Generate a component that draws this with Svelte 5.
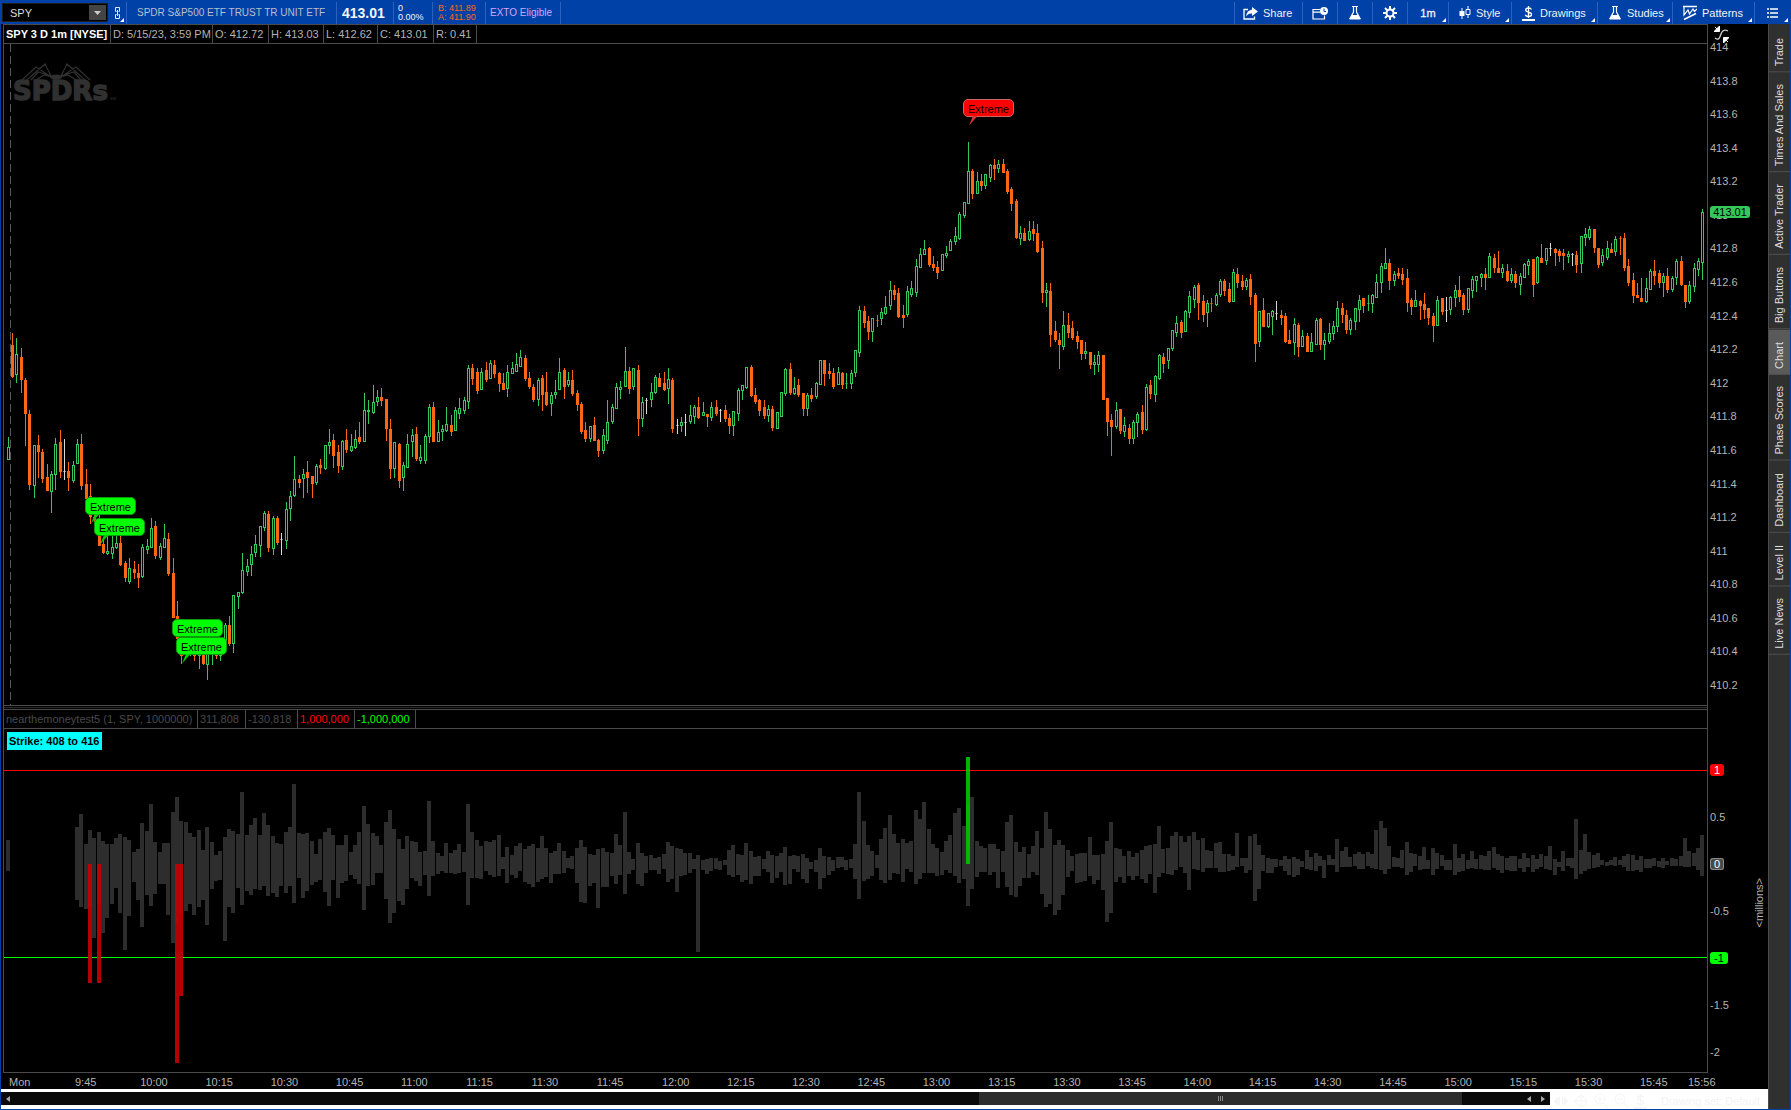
<script lang="ts">
	type Candle = { kind: string; high: number; top: number; bottom: number; low: number };
	type Callout = { x: number; y: number; tone: 'up' | 'down'; tail: boolean };

	// One bar per minute, both panels share the same x scale
	const STEP = 4.3455;
	const FIRST = 8.01;
	const LEFT = 4;
	const WIDTH = 1703;
	const PRICE_TOP = 44;
	const PRICE_HEIGHT = 661;
	const STUDY_HEIGHT = 343;
	const ZERO = 135;

	const barX = (i: number) => Math.floor(FIRST + i * STEP) - LEFT;

	// kind, high, body top, body bottom, low
	const candleData = `
		g437,447,459,459 o333,345,376,377 g338,354,374,382 o348,357,379,392 o378,380,413,445 o410,414,484,489 g445,445,485,497 o435,445,451,477
		o449,452,478,482 o464,477,490,490 g471,474,491,512 g438,444,474,489 o430,442,471,477 w439,471,471,479 o462,471,477,490 g461,465,480,482
		g439,444,463,463 o434,444,485,489 o469,484,498,498 o484,496,516,523 o515,517,519,522 o515,533,545,545 o539,544,552,553 g535,551,553,554
		g535,547,553,558 g535,543,547,548 o535,543,564,565 o561,563,577,581 g558,568,581,583 o561,569,572,578 o564,573,577,587 g544,547,576,577
		g539,546,549,553 g518,528,547,547 o521,526,555,558 g543,546,557,559 g524,538,547,547 o533,539,573,575 o558,573,617,617 o601,616,638,639
		o640,645,655,663 g642,646,652,655 g642,646,652,655 o645,650,655,660 g640,645,655,668 o650,652,663,664 g645,650,664,679 g640,645,654,664
		o640,645,655,658 g640,645,655,660 g623,625,641,645 o616,625,643,645 g595,595,643,652 g592,592,596,608 g553,570,592,593 g559,566,571,575
		g546,554,564,575 g535,544,552,556 g526,526,545,556 g511,513,527,530 o511,514,547,551 g516,518,548,554 o516,518,542,544 w533,539,539,554
		g502,509,540,548 g491,496,508,520 g456,479,495,496 o475,479,482,487 g469,474,478,497 o461,472,477,492 o476,476,483,497 g464,466,482,484
		o459,465,467,473 g445,445,468,469 g429,442,445,453 o434,440,455,467 o445,452,465,472 g440,441,466,469 o429,440,449,452 g434,446,450,451
		g430,439,447,448 o422,437,441,443 g393,410,441,441 g400,410,411,423 g385,402,412,413 g390,397,401,405 o388,397,400,405 o399,399,428,440
		o419,429,468,478 g442,442,468,477 o443,444,480,487 g462,465,477,490 g434,444,467,467 g429,435,441,456 o427,434,458,460 g445,457,460,463
		g434,436,460,463 g404,407,436,442 o402,407,441,441 g420,432,441,441 g425,429,431,440 g407,424,430,431 o415,425,431,435 g407,410,430,430
		g398,408,413,418 g397,400,410,413 g365,368,401,408 o364,368,378,384 o368,372,390,393 g368,372,389,389 o362,370,379,381 g360,363,378,378
		o360,365,373,377 o372,373,383,391 o373,383,389,389 g365,372,388,396 g362,368,373,373 g353,364,371,371 g350,357,366,366 o355,358,378,380
		o372,378,386,388 o384,387,399,401 g378,380,399,405 o375,378,394,410 o372,392,404,405 g392,395,403,415 g380,392,394,398 g358,372,389,389
		o368,370,386,398 g372,380,384,386 o370,380,393,395 o390,393,404,410 o402,404,431,433 o422,430,438,441 g426,426,438,441 o417,425,440,440
		o439,440,450,456 g429,435,450,453 g400,422,440,443 g404,407,421,423 g383,387,408,408 g381,387,389,398 g347,371,386,386 o367,371,388,393
		g368,368,386,389 o365,370,418,435 g397,402,418,426 w398,400,400,413 g383,392,399,406 g375,377,392,393 o373,378,386,386 o372,383,389,390
		g368,379,388,403 o378,380,428,432 w419,425,425,433 g417,422,425,431 w414,422,422,435 g405,415,421,423 g405,407,416,423 o397,407,417,418
		g402,412,415,415 o414,414,416,426 g402,407,417,420 o400,407,413,415 w409,410,410,421 o405,410,418,421 o414,418,425,433 g411,411,425,435
		g388,390,413,420 g385,385,390,399 g367,367,387,388 o365,367,395,396 o388,395,401,403 o399,400,410,415 o400,407,415,418 g405,409,415,421
		o406,409,427,430 g412,412,428,428 g392,392,416,416 g368,369,393,395 o363,369,392,394 g377,388,393,394 o379,385,394,396 o393,393,408,415
		g393,395,408,415 o388,395,398,401 g382,383,396,398 g360,360,384,384 o360,360,373,385 o363,371,373,378 o368,373,386,388 g367,372,384,384
		o372,373,384,388 g373,383,383,388 g370,373,383,388 g350,350,372,376 g306,310,352,356 o306,311,322,327 o316,321,331,339 g318,318,331,341
		o315,320,320,326 g308,312,318,324 g296,307,313,314 g281,290,305,309 o285,290,294,299 o288,293,316,317 o305,315,317,327 g286,291,314,316
		g281,288,294,296 g259,266,292,296 g248,254,267,267 g240,249,254,254 o247,248,264,266 o256,264,267,270 o261,267,272,278 g254,254,270,270
		g246,253,255,257 g239,241,250,250 g227,236,241,244 g212,214,238,239 g202,202,215,217 g142,171,203,203 o169,171,193,198 g172,181,193,193
		o174,181,185,190 g174,174,185,188 g164,165,177,181 o159,165,168,179 g160,164,168,172 o159,164,172,172 o169,171,191,193 o187,189,203,210
		o199,201,237,238 g226,233,238,244 o228,233,240,240 g221,231,239,240 o221,229,233,240 o224,233,251,252 o241,248,292,302 g283,290,292,306
		o283,291,334,346 o321,331,339,341 o333,340,344,368 g311,325,346,349 o313,325,332,337 o321,328,337,339 o331,336,341,348 o340,340,353,359
		g342,351,353,358 o352,352,364,368 g355,362,364,374 g351,355,364,371 o355,355,399,399 o398,398,421,435 o414,420,426,455 g402,410,426,428
		o409,409,430,433 g417,425,431,436 o424,428,438,443 g420,422,438,443 g412,414,422,436 o405,412,429,433 g384,387,429,430 o380,385,393,398
		g375,376,394,401 g354,355,378,379 o353,357,363,372 g348,348,360,368 g330,330,348,350 g316,323,332,336 o320,322,332,337 g310,311,331,331
		g291,296,312,317 g285,287,299,307 o283,285,302,319 o295,301,314,321 g300,303,312,326 o298,303,303,311 g293,295,304,305 g279,281,294,296
		o279,281,290,295 o283,289,301,302 g269,272,301,301 o268,274,282,287 o275,281,286,289 g278,280,286,289 o274,279,296,304 o293,295,343,361
		g311,311,341,346 o298,310,326,326 g313,313,326,327 g310,311,316,334 w301,313,313,319 o310,315,317,324 o313,316,341,342 o330,340,343,343
		g318,324,342,354 o323,325,346,356 g330,336,346,346 o333,336,351,351 g333,342,351,351 g318,320,344,344 o318,319,344,349 g333,340,344,359
		g323,333,341,343 g321,326,333,339 g301,308,326,331 o303,308,314,322 o310,315,329,333 g318,320,329,334 g308,308,321,329 g295,300,309,321
		o298,298,305,312 g295,303,303,310 g294,295,303,312 g274,282,297,297 g263,266,282,292 g248,263,268,268 o259,263,280,289 g271,274,280,285
		o268,273,275,278 o268,274,279,284 o269,278,302,311 o298,300,306,314 g290,300,306,306 o300,301,305,319 o293,304,309,318 o308,308,317,324
		o313,316,325,341 g296,300,325,325 o298,298,311,314 w297,310,310,321 g296,297,309,314 g285,290,297,306 o276,290,296,301 o293,295,309,314
		g288,288,309,312 g276,279,290,297 g276,276,280,291 g273,274,277,286 o268,274,277,289 g253,256,277,277 o254,258,267,272 o251,268,272,272
		g264,268,272,277 o264,271,280,281 g268,274,280,282 o271,274,282,287 g273,276,284,294 g263,264,277,277 g259,261,265,274 o259,259,284,296
		g256,257,282,283 o244,258,262,262 g248,248,260,264 w243,248,248,255 o248,249,252,265 o249,251,255,261 o249,253,255,269 g251,254,256,262
		w253,254,254,265 o251,255,264,272 g236,236,263,272 g228,234,237,245 g226,229,237,239 o229,229,247,252 o248,248,264,267 g249,255,262,265
		g241,248,257,259 o243,249,252,252 g236,239,251,255 o236,238,238,254 o233,238,267,270 o259,266,282,285 o273,280,295,302 o283,295,297,297
		o278,298,301,301 g278,288,301,302 g269,271,289,289 o260,271,275,284 o270,273,282,287 g273,276,282,296 o268,276,289,292 g276,278,289,291
		g259,261,277,284 o256,261,284,285 o285,285,301,307 g281,285,301,303 g263,268,286,291 g258,261,269,275 g209,212,262,279`;

	const candles: Candle[] = candleData
		.trim()
		.split(/\s+/)
		.map((row) => {
			const [high, top, bottom, low] = row
				.slice(1)
				.split(',')
				.map((v) => Number(v) - PRICE_TOP);
			return { kind: row[0], high, top, bottom, low };
		});

	// height above zero / depth below zero, starting at 9:45
	const studyData = `
		37,36 50,43 20,45 34,43 26,74 32,40 23,69 20,54 20,40 26,24 30,49 27,86 24,52 12,18 15,36 41,63 33,31 60,42 22,30 12,20
		21,20 21,51 52,79 67,60 43,50 42,47 31,40 27,51 34,43 14,36 37,61 22,25 9,17 13,16 27,77 35,43 33,49 30,24 72,41 29,27
		39,31 46,25 29,26 51,22 39,32 28,29 21,33 20,22 32,29 37,22 80,39 31,14 30,34 31,27 23,21 10,18 25,16 32,28 36,42 29,16
		19,34 19,19 29,17 12,11 19,15 32,20 58,46 40,22 31,21 28,9 19,9 42,35 54,59 35,49 25,37 15,41 28,25 23,14 22,17 12,22
		13,11 63,32 23,12 11,10 8,7 21,9 11,9 14,10 20,9 12,8 60,41 32,14 24,14 18,15 23,7 22,11 24,13 29,12 7,5 17,19
		9,11 18,14 21,7 15,18 18,20 20,23 16,18 28,15 16,13 11,19 13,10 21,10 13,9 6,4 8,5 16,19 24,38 17,39 10,22 9,19
		15,44 16,23 12,23 11,12 30,20 19,11 52,30 12,10 5,6 21,20 11,22 8,9 9,6 6,6 7,10 10,5 22,18 18,15 16,28 15,12
		11,11 11,9 5,5 9,88 4,6 5,10 6,7 6,5 3,6 4,1 14,11 19,13 10,11 9,18 21,16 13,20 7,12 8,12 5,5 13,8
		9,19 8,14 11,8 17,21 8,20 9,5 8,8 10,15 6,19 2,5 4,8 16,25 8,14 7,11 4,7 7,4 7,3 4,6 5,4 20,15
		72,35 43,17 19,15 13,12 9,4 25,16 36,19 49,16 30,9 21,10 25,18 21,5 23,8 54,20 45,15 62,9 35,9 20,9 16,12 12,11
		23,6 29,9 51,12 56,19 38,15 60,42 67,25 23,13 18,8 16,8 20,11 20,8 15,24 13,8 42,23 49,31 22,33 12,22 17,14 10,14
		18,8 33,11 16,30 52,43 35,40 19,51 24,46 19,31 14,13 8,7 10,19 11,18 11,17 27,12 9,20 9,16 10,26 23,58 42,49 16,18
		15,13 8,19 13,12 7,16 11,12 14,15 18,19 19,10 20,29 38,13 15,9 16,10 28,11 32,6 28,3 22,9 28,26 32,5 24,6 26,8
		14,4 13,4 21,4 22,8 10,8 10,7 8,6 31,3 6,2 6,9 28,6 30,37 19,25 9,7 6,9 5,9 5,3 4,2 8,7 5,11
		7,13 5,11 3,3 14,5 7,6 11,7 8,2 4,14 9,1 5,1 25,8 13,3 17,3 7,3 10,2 12,5 10,5 12,2 10,4 34,5
		43,6 36,10 18,5 7,3 6,3 14,4 22,11 11,8 10,2 8,6 17,5 4,5 16,11 11,5 9,2 4,6 4,6 20,11 6,8 10,7
		4,5 13,4 5,5 9,5 8,6 13,6 17,4 10,6 8,9 6,6 8,7 8,7 5,4 11,8 6,3 9,8 5,5 10,3 8,5 18,6
		5,11 2,3 13,7 6,2 6,4 45,15 14,10 30,7 12,5 9,4 11,3 4,1 2,2 4,1 7,2 4,1 8,3 10,7 9,7 4,6
		8,8 5,4 5,4 6,2 3,3 6,4 3,1 6,2 5,2 8,2 26,3 13,3 11,2 16,6 29,12`;

	const study = [
		{ i: 0, up: 24, down: 7 },
		...studyData
			.trim()
			.split(/\s+/)
			.map((row, n) => {
				const [up, down] = row.split(',').map(Number);
				return { i: n + 16, up, down };
			}),
	];

	const spikes = [
		{ i: 19, y: ZERO, h: 119, tone: 'down' },
		{ i: 21, y: ZERO, h: 119, tone: 'down' },
		{ i: 39, y: ZERO, h: 199, tone: 'down' },
		{ i: 40, y: ZERO, h: 132, tone: 'down' },
		{ i: 221, y: ZERO - 107, h: 107, tone: 'up' },
	];

	const callouts: Callout[] = [
		{ x: 85, y: 497, tone: 'up', tail: true },
		{ x: 94, y: 518, tone: 'up', tail: true },
		{ x: 172, y: 619, tone: 'up', tail: false },
		{ x: 176, y: 637, tone: 'up', tail: true },
		{ x: 963, y: 99, tone: 'down', tail: true },
	];

	const prices = Array.from({ length: 20 }, (_, i) => String(Math.round(4140 - i * 2) / 10));

	const studyTicks = [
		{ label: '1', tag: 'red' },
		{ label: '0.5' },
		{ label: '0', tag: 'gray' },
		{ label: '-0.5' },
		{ label: '-1', tag: 'green' },
		{ label: '-1.5' },
		{ label: '-2' },
	];

	const times = [
		'Mon', '9:45', '10:00', '10:15', '10:30', '10:45', '11:00', '11:15', '11:30', '11:45',
		'12:00', '12:15', '12:30', '12:45', '13:00', '13:15', '13:30', '13:45', '14:00', '14:15',
		'14:30', '14:45', '15:00', '15:15', '15:30', '15:45', '15:56',
	];

	const quote = ['D: 5/15/23, 3:59 PM', 'O: 412.72', 'H: 413.03', 'L: 412.62', 'C: 413.01', 'R: 0.41'];

	const tabs = [
		'Trade', 'Times And Sales', 'Active Trader', 'Big Buttons', 'Chart',
		'Phase Scores', 'Dashboard', 'Level II', 'Live News',
	];

	let symbol = $state('SPY');
	let activeTab = $state('Chart');
</script>

{#snippet flask()}
	<svg width="14" height="16" viewBox="0 0 14 16">
		<path d="M4 1.5h6M5.5 2v5L2 13.5h10L8.500 7V2" fill="none" stroke="#fff" stroke-width="1.2" />
		<path d="M4 10h6l2.500 4.500h-11z" fill="#fff" />
	</svg>
{/snippet}

{#snippet dollar(color: string)}
	<svg width="13" height="16" viewBox="0 0 13 16">
		<path d="M9.500 4.500C9 3.500 8 3 6.500 3S3.700 3.600 3.700 5s1.300 1.800 2.800 2.100 3 .8 3 2.300-1.200 2.100-3 2.100S3.700 10.800 3.300 9.700M6.500 1v12" fill="none" stroke={color} stroke-width="1.3" />
		<path d="M0 14h13v2H0z" fill={color} />
	</svg>
{/snippet}

<div class="app">
	<header class="toolbar">
		<div class="symbol">
			<input type="text" aria-label="Symbol" bind:value={symbol} />
			<button type="button" aria-label="Symbol list">
				<svg width="7" height="4" viewBox="0 0 7 4"><path d="M0 0h7L3.500 4z" fill="#ccc" /></svg>
			</button>
		</div>
		<button type="button" class="tool link menu" aria-label="Link">
			<svg width="8" height="14" viewBox="0 0 8 14">
				<path d="M2.500 5.500H1.500v-4h4v4h-1M2.500 8.500h-1v4h4v-4h-1M3.500 4v6" fill="none" stroke="#dfe8f7" />
			</svg>
		</button>
		<div class="title">SPDR S&amp;P500 ETF TRUST TR UNIT ETF</div>
		<div class="last">413.01</div>
		<div class="change"><span>0</span><span>0.00%</span></div>
		<div class="bidask"><span>B: 411.89</span><span>A: 411.90</span></div>
		<div class="exto">EXTO Eligible</div>

		<div class="tools">
			<button type="button" class="tool">
				<svg width="15" height="13" viewBox="0 0 15 13">
					<path d="M5 2.500H1v9.500h10.500V9.500" fill="none" stroke="#fff" stroke-width="1.300" />
					<path d="M9 0l6 4.500L9 9V6.500C6 6.300 4.500 7.300 3.300 9.500 3.300 5.500 5.500 3 9 2.700z" fill="#fff" />
				</svg>
				Share
			</button>
			<button type="button" class="tool icon" aria-label="Alerts">
				<svg width="16" height="13" viewBox="0 0 16 13">
					<path d="M8 2.500H1V12h11.500V8.500M1 5.200h7" fill="none" stroke="#fff" stroke-width="1.200" />
					<circle cx="12" cy="4" r="4" fill="#fff" />
					<path d="M12 1.500V4.500h2" fill="none" stroke="#0041a8" />
				</svg>
			</button>
			<button type="button" class="tool icon" aria-label="Lab">{@render flask()}</button>
			<button type="button" class="tool icon" aria-label="Settings">
				<svg width="14" height="14" viewBox="0 0 14 14">
					<g stroke="#fff" stroke-width="2">
						<path d="M7 0v3M7 11v3M0 7h3M11 7h3M2 2l2.200 2.200M9.800 9.800L12 12M12 2L9.800 4.200M4.200 9.800L2 12" />
						<circle cx="7" cy="7" r="3.500" fill="none" />
					</g>
				</svg>
			</button>
			<button type="button" class="tool icon menu strong">1m</button>
			<button type="button" class="tool menu">
				<svg width="12" height="14" viewBox="0 0 12 14">
					<path d="M3 2v11M9 0v12" stroke="#fff" />
					<path d="M.5 5h5v5h-5z" fill="#fff" />
					<path d="M7 3.500h4v5H7z" fill="#0041a8" stroke="#fff" />
				</svg>
				Style
			</button>
			<button type="button" class="tool menu">{@render dollar('#fff')}Drawings</button>
			<button type="button" class="tool menu">{@render flask()}Studies</button>
			<button type="button" class="tool menu">
				<svg width="14" height="16" viewBox="0 0 14 16">
					<path d="M0 1.500h14M1 14.500L13 8.500" stroke="#fff" stroke-width="1.600" />
					<path d="M1 2v8l4-5 1.500 4L10 4l1.500 2.500L14 4" fill="none" stroke="#fff" stroke-width="1.200" />
				</svg>
				Patterns
			</button>
			<button type="button" class="tool icon menu" aria-label="List">
				<svg width="11" height="11" viewBox="0 0 11 11">
					<path d="M0 1h2M3 1h8M0 5h2M3 5h8M0 9h2M3 9h8" stroke="#fff" stroke-width="1.500" />
				</svg>
			</button>
		</div>
	</header>

	<div class="workspace">
		<main>
			<div class="charts">
				<div class="info quote">
					<strong>SPY 3 D 1m [NYSE]</strong>
					{#each quote as item}
						<span>{item}</span>
					{/each}
				</div>
				<div class="axis corner">
					<svg width="15" height="17" viewBox="0 0 15 17">
						<path d="M1 12c4 3 5-1 6-4s3-5 7-3" fill="none" stroke="#ccc" stroke-width="1.300" />
						<path d="M1 1l3 3M0 5.500h5.500V0zM14 16l-3-3M15 11.500H9.500V17z" fill="#fff" stroke="#fff" />
					</svg>
				</div>

				<div class="panel price">
					<svg class="plot" viewBox="0 0 {WIDTH} {PRICE_HEIGHT}" preserveAspectRatio="none" shape-rendering="crispEdges">
						<line class="day" x1="6.500" x2="6.500" y1="0" y2={PRICE_HEIGHT} />
						{#each candles as c, i}
							{@const x = barX(i)}
							<g class={c.kind}>
								{#if c.top === c.bottom}
									<rect class="fill" {x} y={c.high} width="1" height={c.low - c.high + 1} />
									<rect class="fill dim" x={x - 1} y={c.top} width="3" height="1" />
								{:else}
									<rect class="fill" {x} y={c.high} width="1" height={c.low - c.high + 1} />
									<rect class="fill" x={x - 1} y={c.top} width="3" height={c.bottom - c.top + 1} />
									{#if c.kind === 'g' && c.bottom - c.top > 1}
										<rect class="hollow" {x} y={c.top + 1} width="1" height={c.bottom - c.top - 1} />
									{/if}
								{/if}
							</g>
						{/each}
					</svg>
					<svg class="logo" width="104" height="42" viewBox="0 0 104 42">
						<ellipse cx="43" cy="14" rx="6" ry="2.500" fill="#303030" />
						<path d="M38 14L23 4 9 17M38 13L32 1 14 17M39 13L25 9 18 17M39 14L31 12 23 17M48 14L63 4 77 17M48 13L54 1 72 17M47 13L61 9 68 17M47 14L55 12 63 17" fill="none" stroke="#303030" stroke-width="1.200" />
						<text class="brand" x="0" y="37" font-size="26" font-weight="bold">SPDRs</text>
						<text x="97" y="37" font-size="4">SM</text>
					</svg>
					{#each callouts as c}
						<div
							class="callout {c.tone}"
							style="left: {((c.x - LEFT) / WIDTH) * 100}%; top: {((c.y - PRICE_TOP) / PRICE_HEIGHT) * 100}%"
						>
							Extreme
							{#if c.tail}
								<svg width="9" height="10" viewBox="0 0 9 10"><path d="M4 0L0 9.500 8.500 0z" /></svg>
							{/if}
						</div>
					{/each}
				</div>
				<div class="axis price-axis">
					{#each prices as p}
						<span>{p}</span>
					{/each}
					<b class="last-tag">413.01</b>
				</div>

				<div class="splitter"></div>
				<div class="axis"></div>

				<div class="info inputs">
					<span>nearthemoneytest5 (1, SPY, 1000000)</span>
					<span>311,808</span>
					<span>-130,818</span>
					<span class="red">1,000,000</span>
					<span class="green">-1,000,000</span>
				</div>
				<div class="axis"></div>

				<div class="panel study">
					<svg class="plot" viewBox="0 0 {WIDTH} {STUDY_HEIGHT}" preserveAspectRatio="none" shape-rendering="crispEdges">
						{#each study as bar}
							<rect class="bar" x={barX(bar.i) - 2} y={ZERO - bar.up} width="4" height={bar.up + bar.down} />
						{/each}
						<rect class="upper" x="0" y="41" width={WIDTH} height="1" />
						<rect class="lower" x="0" y="228" width={WIDTH} height="1" />
						{#each spikes as s}
							<rect class="spike {s.tone}" x={barX(s.i) - 2} y={s.y} width="4" height={s.h} />
						{/each}
					</svg>
					<strong class="strike">Strike: 408 to 416</strong>
				</div>
				<div class="axis study-axis">
					<div class="ticks">
						{#each studyTicks as t}
							<span class={t.tag}>{t.label}</span>
						{/each}
					</div>
					<div class="unit">&lt;millions&gt;</div>
				</div>
			</div>

			<div class="times">
				{#each times as t}
					<span>{t}</span>
				{/each}
			</div>

			<footer>
				<div class="scroll">
					<button type="button" aria-label="Scroll to start">
						<svg width="4" height="6" viewBox="0 0 4 6"><path d="M4 0v6L0 3z" /></svg>
					</button>
					<div class="track">
						<div class="thumb"><i></i><i></i><i></i></div>
					</div>
					<button type="button" aria-label="Scroll left">
						<svg width="4" height="6" viewBox="0 0 4 6"><path d="M4 0v6L0 3z" /></svg>
					</button>
					<button type="button" aria-label="Scroll right">
						<svg width="4" height="6" viewBox="0 0 4 6"><path d="M0 0v6l4-3z" /></svg>
					</button>
				</div>
				<div class="drawing">
					<svg width="14" height="14" viewBox="0 0 14 14"><path d="M4 3v8L0 7zM10 3v8l4-4zM5.500 3v8M8.500 3v8" fill="#f5f5f5" stroke="#f5f5f5" /></svg>
					<svg width="14" height="14" viewBox="0 0 14 14"><g fill="none" stroke="#f5f5f5"><circle cx="7" cy="7" r="5" /><path d="M7 0v14M0 7h14" /></g></svg>
					<svg width="14" height="16" viewBox="0 0 14 16"><g fill="none" stroke="#f5f5f5"><circle cx="6" cy="6" r="5" /><path d="M6 3v6M3 6h6M10 10l4 5" /></g></svg>
					<svg width="14" height="16" viewBox="0 0 14 16"><g fill="none" stroke="#f5f5f5"><circle cx="6" cy="6" r="5" /><path d="M3 6h6M10 10l4 5" /></g></svg>
					{@render dollar('#f5f5f5')}
					<span>Drawing set: Default</span>
				</div>
			</footer>
		</main>

		<nav>
			{#each tabs as tab}
				<button type="button" class:active={tab === activeTab} onclick={() => (activeTab = tab)}>{tab}</button>
			{/each}
		</nav>
	</div>
</div>

<style>
	:global(body) {
		margin: 0;
		background: #000;
	}

	.app {
		--blue: #0041a8;
		--line: #4b4b4b;
		display: flex;
		flex-direction: column;
		box-sizing: border-box;
		min-height: 100vh;
		border: 1px solid var(--blue);
		border-width: 0 1px 1px;
		background: #000;
		color: #b4b4b4;
		font: 11px/12px 'Liberation Sans', Arial, sans-serif;
		white-space: nowrap;
	}

	button,
	input {
		margin: 0;
		padding: 0;
		border: 0;
		background: none;
		color: inherit;
		font: inherit;
	}

	svg {
		flex: none;
		display: block;
	}

	/* top toolbar */
	.toolbar {
		display: flex;
		box-sizing: border-box;
		height: 24px;
		padding-top: 2px;
		background: var(--blue);
	}

	.toolbar > div {
		display: flex;
		align-items: center;
		box-sizing: border-box;
	}

	.toolbar .symbol {
		width: 106px;
		height: 19px;
		margin: 1px 0 2px 1px;
		padding: 1px;
		border: 1px solid #1c1c1c;
		background: #000;
	}

	.symbol input {
		flex: 1;
		min-width: 0;
		padding-left: 6px;
		color: #ddd;
	}

	.symbol button {
		display: grid;
		place-items: center;
		width: 17px;
		height: 15px;
		background: #444;
	}

	.tool {
		position: relative;
		display: flex;
		align-items: center;
		gap: 5px;
		padding-left: 8px;
		border-left: 1px solid #2a62bd;
		color: #f2f2f2;
	}

	.tool.menu {
		padding-left: 10px;
	}

	.tool.link {
		width: 18px;
		padding-left: 6px;
		border-left: 0;
	}

	.tool.icon {
		justify-content: center;
		padding: 0;
	}

	.tool.strong {
		-webkit-text-stroke: 0.3px #f2f2f2;
	}

	.menu::after {
		content: '';
		position: absolute;
		right: 2px;
		bottom: 2px;
		border: 2px solid transparent;
		border-right-color: #fff;
		border-bottom-color: #fff;
	}

	.toolbar .title {
		width: 210px;
		padding-left: 10px;
		border-left: 1px solid #2a62bd;
		color: #b9bfc9;
		font-size: 10px;
	}

	.toolbar .last {
		width: 57px;
		padding-left: 5px;
		border-left: 1px solid #2a62bd;
		color: #f4f4f4;
		font-size: 14px;
		font-weight: bold;
	}

	.toolbar .change,
	.toolbar .bidask {
		flex-direction: column;
		align-items: flex-start;
		justify-content: center;
		width: 39px;
		padding-left: 4px;
		border-left: 1px solid #2a62bd;
		color: #f2f2f2;
		font-size: 9px;
		line-height: 9px;
	}

	.toolbar .bidask {
		width: 53px;
		padding-left: 5px;
		color: #ff6414;
	}

	.toolbar .exto {
		width: 76px;
		padding-left: 4px;
		border: 1px solid #2a62bd;
		border-width: 0 1px;
		color: #cfa6ff;
		font-size: 10px;
	}

	.toolbar .tools {
		display: grid;
		grid-template-columns: 68px 35px 35px 35px 41px 63px 86px 75px 82px 36px;
		align-items: stretch;
		margin-left: auto;
	}

	/* chart area */
	.workspace {
		flex: 1;
		display: flex;
	}

	main {
		flex: 1;
		display: flex;
		flex-direction: column;
		min-width: 0;
	}

	.charts {
		flex: 1;
		display: grid;
		grid-template-columns: 1fr 61px;
		grid-template-rows: 20px 662fr 3px 20px 344fr;
		padding-left: 2px;
	}

	.info,
	.panel,
	.splitter {
		border-left: 1px solid var(--line);
	}

	.axis {
		position: relative;
		border-left: 1px solid var(--line);
	}

	.info {
		display: grid;
		box-sizing: border-box;
		border-top: 1px solid var(--line);
		border-bottom: 1px solid var(--line);
		line-height: 19px;
	}

	.info > * {
		padding-left: 2px;
		border-right: 1px solid var(--line);
	}

	.quote {
		grid-template-columns: 107px 102px 56px 55px 54px 56px 43px;
	}

	.quote strong {
		color: #fff;
	}

	.inputs {
		grid-template-columns: 194px 48px 52px 57px 61px;
		color: #4a4a4a;
	}

	.red {
		color: #f00;
	}

	.green {
		color: #0f0;
	}

	.corner svg {
		margin: 2px 0 0 6px;
	}

	.splitter {
		background: linear-gradient(#000 1px, #2a2a2a 1px 2px, #000 2px);
	}

	.panel {
		position: relative;
		min-height: 0;
		border-bottom: 1px solid var(--line);
	}

	.plot {
		position: absolute;
		width: 100%;
		height: 100%;
	}

	.day {
		stroke: #5a5a5a;
		stroke-dasharray: 8 4;
	}

	.g {
		color: #33c859;
	}

	.o {
		color: #ff6614;
	}

	.w {
		color: #d8d8d8;
	}

	.fill {
		fill: currentColor;
	}

	.dim {
		fill-opacity: 0.6;
	}

	.hollow {
		fill: #000;
	}

	.logo {
		position: absolute;
		left: 9px;
		top: 19px;
		fill: #303030;
		font-family: 'DejaVu Sans', sans-serif;
	}

	.brand {
		stroke: #303030;
		stroke-width: 1.5px;
	}

	.callout {
		position: absolute;
		box-sizing: border-box;
		width: 51px;
		height: 18px;
		border: 1px solid #0a9a0a;
		border-radius: 5px;
		background: #0f0;
		color: #000;
		line-height: 18px;
		text-align: center;
	}

	.callout svg {
		position: absolute;
		left: 5px;
		top: 16px;
		fill: #0c0;
	}

	.callout.down {
		border-color: #c66;
		background: #f00;
	}

	.callout.down svg {
		fill: #d33;
	}

	.price-axis {
		display: flex;
		flex-direction: column;
		justify-content: space-between;
		padding: 0 0 15px 2px;
		margin-top: -3px;
	}

	.last-tag {
		position: absolute;
		left: 2px;
		top: 165px;
		box-sizing: border-box;
		width: 40px;
		height: 12px;
		border-radius: 3px;
		background: #33c859;
		color: #000;
		font-weight: normal;
		line-height: 13px;
		text-align: center;
	}

	.strike {
		position: absolute;
		left: 3px;
		top: 3px;
		padding: 0 2px;
		background: #0ff;
		color: #000;
		line-height: 18px;
	}

	.bar {
		fill: #2d2d2d;
	}

	.upper {
		fill: #f00;
	}

	.lower {
		fill: #0f0;
	}

	.spike {
		opacity: 0.9;
	}

	.spike.up {
		fill: #00c800;
	}

	.spike.down {
		fill: #c80000;
	}

	.study-axis {
		display: flex;
		justify-content: space-between;
		padding: 35px 3px 15px 2px;
	}

	.ticks {
		display: flex;
		flex-direction: column;
		align-items: flex-start;
		justify-content: space-between;
	}

	.ticks .red,
	.ticks .gray,
	.ticks .green {
		padding: 0 4px;
		border-radius: 3px;
		background: #f00;
		color: #fff;
	}

	.ticks .gray {
		background: #4a4a4a;
		box-shadow: inset 0 0 0 1px #888;
	}

	.ticks .green {
		background: #0f0;
		color: #000;
	}

	.unit {
		align-self: center;
		margin-bottom: 16px;
		writing-mode: vertical-rl;
		transform: rotate(180deg);
	}

	.times {
		display: grid;
		grid-template-columns: 66px repeat(24, minmax(0, 1fr)) 48px 80px;
		height: 16px;
		padding-left: 8px;
		line-height: 18px;
	}

	/* bottom bar */
	footer {
		display: flex;
		align-items: flex-start;
		height: 20px;
		background: #fff;
	}

	.scroll {
		flex: 1;
		display: flex;
		height: 13px;
		margin-top: 3px;
		background: #0a0a0a;
		fill: #aaa;
	}

	.scroll button {
		display: grid;
		place-items: center;
		width: 14px;
	}

	.track {
		flex: 1;
		margin-right: 60px;
	}

	.thumb {
		display: flex;
		align-items: center;
		justify-content: center;
		gap: 1px;
		width: 33.4%;
		height: 13px;
		margin-left: auto;
		background: #2d2d2d;
	}

	.thumb i {
		width: 1px;
		height: 5px;
		background: #888;
	}

	.drawing {
		display: flex;
		align-items: center;
		gap: 6px;
		box-sizing: border-box;
		width: 218px;
		height: 20px;
		padding: 4px 0 0 4px;
		color: #f3f3f3;
	}

	.drawing span {
		margin-left: 8px;
	}

	/* right tabs */
	nav {
		display: flex;
		flex-direction: column;
		width: 21px;
		padding-top: 2px;
		border-left: 1px solid #4b4b4b;
		background: #303030;
		color: #ddd;
	}

	/* rotated by 180deg, so the paddings swap sides */
	nav button {
		padding: 5px 3px 12px;
		border-top: 1px solid #4f4f4f;
		line-height: 15px;
		writing-mode: vertical-rl;
		transform: rotate(180deg);
	}

	nav button.active {
		background: #5a5a5a;
	}
</style>
